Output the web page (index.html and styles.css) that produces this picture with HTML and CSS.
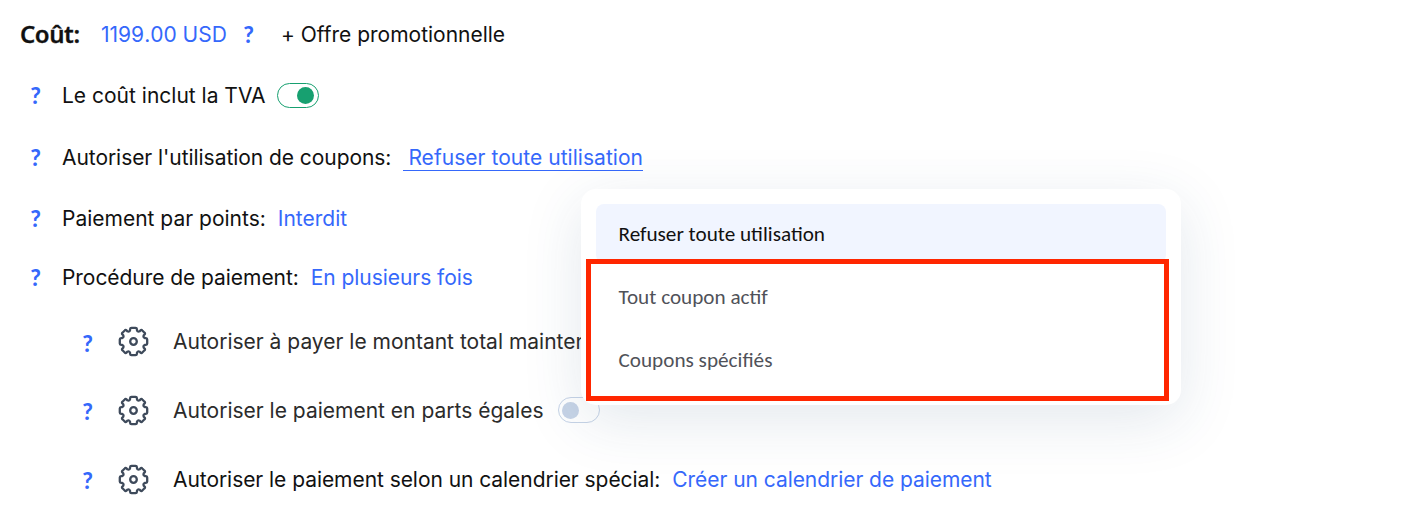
FILE: index.html
```html
<!DOCTYPE html>
<html lang="fr">
<head>
<meta charset="utf-8">
<title>Coût</title>
<link rel="stylesheet" href="styles.css">
</head>
<body>
<svg width="0" height="0" class="defs"><symbol id="gear" viewBox="-15.5 -15.5 31 31"><path d="M-2-13.7H2Q3.3-13.7 3.4-12.4L3.5-11.2Q4.2-9.3 6.2-10.3L7-11.1Q7.9-12 8.8-11L11-8.8Q12-7.9 11.1-7L10.3-6.2Q9.3-4.2 11.2-3.5L12.4-3.4Q13.7-3.3 13.7-2V2Q13.7 3.3 12.4 3.4L11.2 3.5Q9.3 4.2 10.3 6.2L11.1 7Q12 7.9 11 8.8L8.8 11Q7.9 12 7 11.1L6.2 10.3Q4.2 9.3 3.5 11.2L3.4 12.4Q3.3 13.7 2 13.7H-2Q-3.3 13.7-3.4 12.4L-3.5 11.2Q-4.2 9.3-6.2 10.3L-7 11.1Q-7.9 12-8.8 11L-11 8.8Q-12 7.9-11.1 7L-10.3 6.2Q-9.3 4.2-11.2 3.5L-12.4 3.4Q-13.7 3.3-13.7 2V-2Q-13.7-3.3-12.4-3.4L-11.2-3.5Q-9.3-4.2-10.3-6.2L-11.1-7Q-12-7.9-11-8.8L-8.8-11Q-7.9-12-7-11.1L-6.2-10.3Q-4.2-9.3-3.5-11.2L-3.4-12.4Q-3.3-13.7-2-13.7Z"/><circle r="3.3"/></symbol></svg>
<main class="settings">
  <div class="row cost"><strong class="title">Coût:</strong><a class="link price">1199.00 USD</a><span class="help">?</span><span class="promo">+ Offre promotionnelle</span></div>
  <div class="row vat"><span class="help">?</span><span class="label">Le coût inclut la TVA</span><span class="toggle on"></span></div>
  <div class="row coupons"><span class="help">?</span><span class="label tight">Autoriser l'utilisation de coupons:</span><a class="link open">Refuser toute utilisation</a></div>
  <div class="row points"><span class="help">?</span><span class="label">Paiement par points:</span><a class="link">Interdit</a></div>
  <div class="row"><span class="help">?</span><span class="label tight">Procédure de paiement:</span><a class="link tight">En plusieurs fois</a></div>
  <div class="row sub first"><span class="help">?</span><svg class="gear"><use href="#gear"/></svg><span class="label soft">Autoriser à payer le montant total maintenant</span></div>
  <div class="row sub"><span class="help">?</span><svg class="gear"><use href="#gear"/></svg><span class="label soft">Autoriser le paiement en parts égales</span><span class="toggle off"></span></div>
  <div class="row sub"><span class="help">?</span><svg class="gear"><use href="#gear"/></svg><span class="label tight">Autoriser le paiement selon un calendrier spécial:</span><a class="link tight">Créer un calendrier de paiement</a></div>
</main>
<div class="menu">
  <div class="option selected">Refuser toute utilisation</div>
  <div class="option">Tout coupon actif</div>
  <div class="option">Coupons spécifiés</div>
</div>
<div class="highlight"></div>
</body>
</html>
```
FILE: styles.css
```css
body {
  margin: 0;
  height: 508px;
  overflow: hidden;
  background: #fff;
  color: #111;
  font: 21px/30px Inter, "Liberation Sans", sans-serif;
}
.defs { display: block; }
.settings { padding-top: 4px; white-space: nowrap; }
.row {
  display: flex;
  align-items: center;
  height: 60px;
  padding-left: 30px;
}
.cost { height: 61px; padding-left: 20px; }
.vat { height: 61px; }
.coupons { height: 63px; }
.points { height: 59px; }
.sub { height: 69px; padding-left: 82px; }
.sub.first { height: 68px; }
.title { width: 81px; padding-bottom: 2px; font: 600 24px/30px "Noto Sans", sans-serif; letter-spacing: -.45px; -webkit-text-stroke: .3px; }
.link { color: #3568fb; margin-left: 12px; }
.price { margin-left: 0; width: 142px; font-kerning: none; }
.promo { letter-spacing: -.01px; }
.tight { letter-spacing: -.055px; }
.help {
  flex: none;
  width: 32px;
  color: #3568fb;
  font: 700 24px/30px Carlito, sans-serif;
}
.cost .help { width: 38px; }
.sub .help { width: 36px; padding-top: 3px; }
.open {
  padding-left: 5px;
  border-bottom: 1px solid #3568fb;
  line-height: 25px;
  letter-spacing: .04px;
}
.gear {
  flex: none;
  width: 31px;
  height: 31px;
  margin: 0 24px 1px 0;
  fill: none;
  stroke: #3e4a5b;
  stroke-width: 2.3;
}
.soft { color: #2b2b2b; }
.toggle {
  box-sizing: border-box;
  display: flex;
  align-items: center;
  width: 42px;
  height: 25px;
  margin-left: 12px;
  padding: 0 4px;
  border: 1px solid #17a070;
  border-radius: 13px;
}
.toggle::after {
  content: "";
  width: 17px;
  height: 17px;
  border-radius: 50%;
  background: #17a070;
}
.on { justify-content: flex-end; }
.off { height: 26px; margin: 0 0 1px 14px; padding: 0 3px; border-color: #c7d4e7; }
.off::after { background: #c7d4e7; }
.menu {
  position: absolute;
  left: 581px;
  top: 189px;
  box-sizing: border-box;
  width: 600px;
  height: 216px;
  padding: 15px;
  border-radius: 15px;
  background: #fff;
  box-shadow: 0 15px 60px rgba(40, 75, 115, .13);
}
.option {
  height: 59px;
  margin-bottom: 4px;
  padding-left: 22.5px;
  border-radius: 8px;
  color: #505259;
  font: 21.2px/60px Carlito, Lato, sans-serif;
}
.selected { background: #f1f5ff; color: #111; }
.highlight {
  position: absolute;
  left: 586px;
  top: 259px;
  box-sizing: border-box;
  width: 583px;
  height: 142px;
  border: 5px solid #ff2600;
}
```
